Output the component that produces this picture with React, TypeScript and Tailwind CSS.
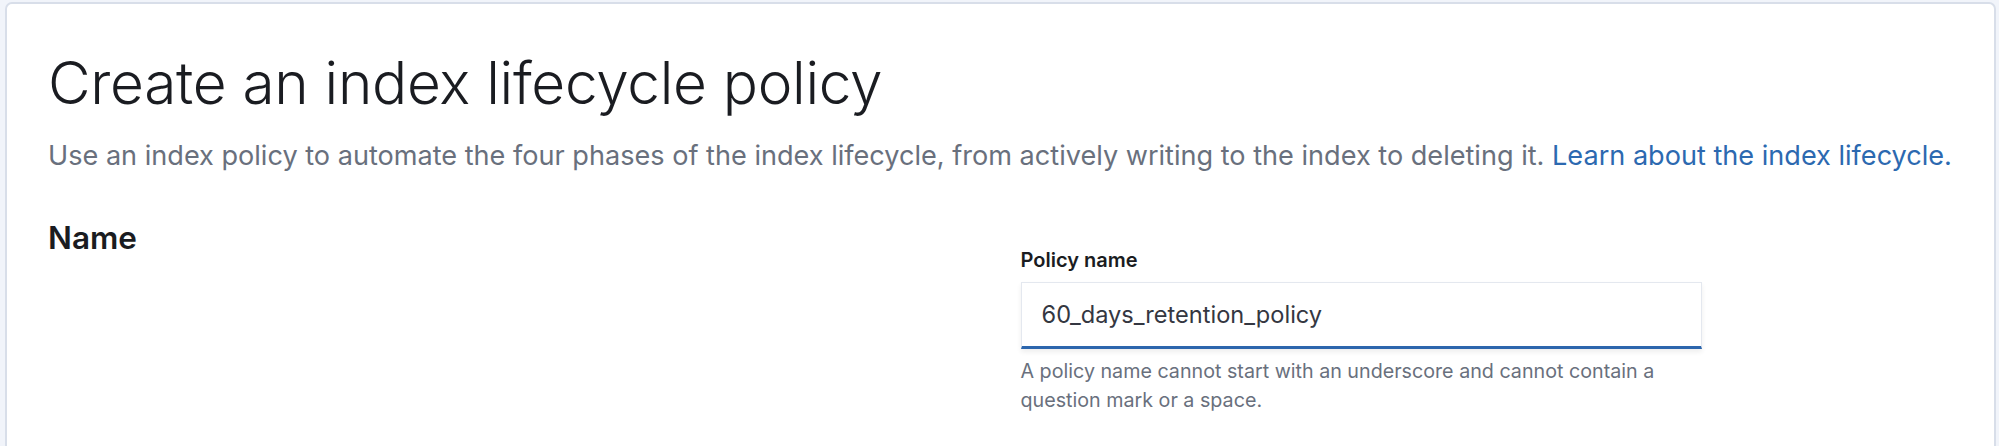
import React from 'react';

export default function App() {
  return (
    <main
      className="min-h-screen bg-[#f1f4fa] pt-[2px] pl-[5px] pr-[3px]"
      style={{ fontFamily: 'Inter, "Noto Sans", sans-serif' }}
    >
      <div className="bg-white border-2 border-[#d8dee9] rounded-[7px] min-h-[470px] px-[41px] pt-[44px]">
        {/* Header */}
        <h1 className="text-[58.5px] leading-[70px] font-light text-[#1a1c21] tracking-[-0.3px]">
          Create an index lifecycle policy
        </h1>
        <p className="mt-[19px] text-[27.1px] leading-[38px] text-[#69707d] whitespace-nowrap">
          Use an index policy to automate the four phases of the index lifecycle, from actively writing to the index to
          deleting it.{' '}
          <a href="#" className="text-[#2c69b0]">
            Learn about the index lifecycle.
          </a>
        </p>

        {/* Name row */}
        <div className="mt-[44px] grid grid-cols-2 gap-[40px]">
          <div>
            <h2 className="text-[31.5px] leading-[38px] font-semibold text-[#1a1c21]">Name</h2>
          </div>
          <div className="pt-[28px]">
            <label className="block text-[20px] leading-[26px] font-semibold text-[#1a1c21]">Policy name</label>
            <div className="mt-[9px] w-[681px] h-[67px] bg-white border border-[#e4e8ef] border-b-[3px] border-b-[#2c66ad] shadow-[0_3px_5px_rgba(0,0,0,0.07)] flex items-center px-[20px]">
              <span className="text-[23.6px] text-[#343741]">60_days_retention_policy</span>
            </div>
            <p className="mt-[8px] w-[681px] text-[19.7px] leading-[29px] text-[#69707d]">
              A policy name cannot start with an underscore and cannot contain a question mark or a space.
            </p>
          </div>
        </div>
      </div>
    </main>
  );
}
